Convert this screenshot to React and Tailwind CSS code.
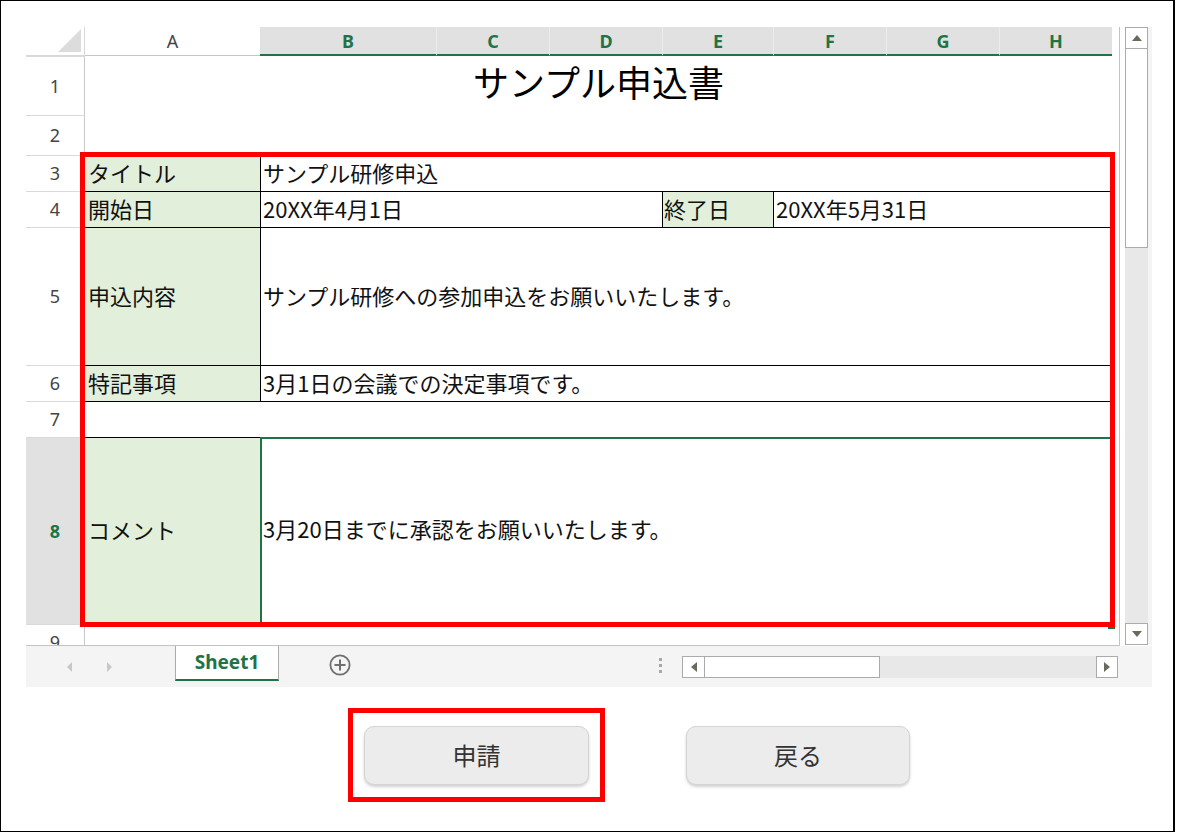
import React from "react";

function RowHead({ n, sel }) {
  return (
    <div
      className={
        "flex items-center justify-center border-t border-r border-t-[#dadada] border-r-[#c8c8c8] text-[18px] font-['Noto_Sans',sans-serif] " +
        (sel ? "bg-[#e1e1e1] text-[#217346] font-bold" : "bg-white text-[#444]")
      }
    >
      {n}
    </div>
  );
}

function ColHead({ c, first }) {
  return (
    <div
      className={
        "flex items-center justify-center bg-[#e1e1e1] text-[#217346] font-bold text-[18px] font-['Noto_Sans',sans-serif] border-b-2 border-b-[#217346] pt-[1px] " +
        (first ? "" : "border-l border-l-[#ececec]")
      }
    >
      {c}
    </div>
  );
}

function Label({ children }) {
  return (
    <div className="flex items-center bg-[#e2efda] pl-[3px] pb-[3px] text-[22px] text-[#111] border-t border-black">
      {children}
    </div>
  );
}

function ScrollTri({ dir }) {
  const pts = {
    up: "0,6 5,0 10,6",
    down: "0,0 10,0 5,6",
    left: "6,0 6,10 0,5",
    right: "0,0 0,10 6,5",
  }[dir];
  const vert = dir === "up" || dir === "down";
  return (
    <svg width={vert ? 10 : 6} height={vert ? 6 : 10} viewBox={vert ? "0 0 10 6" : "0 0 6 10"}>
      <polygon points={pts} fill="#676b5c" />
    </svg>
  );
}

const valCls = "flex items-center pl-[2px] pb-[3px] text-[22px] text-[#111]";

export default function App() {
  return (
    <div className="w-[1177px] h-[832px] bg-white font-['Noto_Sans_CJK_JP',sans-serif]">
      <div className="w-[1175px] h-[832px] border border-black border-r-2 pl-[25px] pt-[26px] flex flex-col">
        {/* spreadsheet */}
        <div className="w-[1126px] h-[660px] flex flex-col">
          <div className="h-[619px] flex">
            {/* grid area */}
            <div className="relative w-[1094px] h-[619px] border-r border-b border-[#c3c3c3] overflow-hidden">
              <div className="grid w-[1086px] grid-cols-[59px_175px_176px_113px_113px_111px_113px_113px_113px] grid-rows-[29px_59px_40px_36px_36px_138px_36px_36px_187px_36px]">
                {/* header row */}
                <div className="relative bg-white border-r border-b border-[#d8d8d8]">
                  <svg className="absolute right-[3px] bottom-[3px]" width="23" height="23" viewBox="0 0 23 23">
                    <polygon points="23,0 23,23 0,23" fill="#dcdcdc" />
                  </svg>
                </div>
                <div className="flex items-center justify-center bg-white text-[#444] text-[18px] font-['Noto_Sans',sans-serif] border-b border-[#c6c6c6] pt-[1px]">
                  A
                </div>
                <ColHead c="B" first />
                <ColHead c="C" />
                <ColHead c="D" />
                <ColHead c="E" />
                <ColHead c="F" />
                <ColHead c="G" />
                <ColHead c="H" />

                {/* row 1 */}
                <RowHead n="1" />
                <div className="col-span-8 flex items-center justify-center pb-[9px] text-[36px] text-black">
                  サンプル申込書
                </div>

                {/* row 2 */}
                <RowHead n="2" />
                <div className="col-span-8" />

                {/* row 3 */}
                <RowHead n="3" />
                <Label>タイトル</Label>
                <div className={"col-span-7 border-t border-l border-r border-black " + valCls}>
                  サンプル研修申込
                </div>

                {/* row 4 */}
                <RowHead n="4" />
                <Label>開始日</Label>
                <div className={"col-span-3 border-t border-l border-black " + valCls}>
                  20XX年4月1日
                </div>
                <div className="flex items-center bg-[#e2efda] border-t border-l border-black pl-[1px] pb-[3px] text-[22px] text-[#111]">
                  終了日
                </div>
                <div className={"col-span-3 border-t border-l border-r border-black " + valCls}>
                  20XX年5月31日
                </div>

                {/* row 5 */}
                <RowHead n="5" />
                <Label>申込内容</Label>
                <div className={"col-span-7 border-t border-l border-r border-black " + valCls}>
                  サンプル研修への参加申込をお願いいたします。
                </div>

                {/* row 6 */}
                <RowHead n="6" />
                <Label>特記事項</Label>
                <div className={"col-span-7 border-t border-l border-r border-black " + valCls}>
                  3月1日の会議での決定事項です。
                </div>

                {/* row 7 */}
                <RowHead n="7" />
                <div className="col-span-8 border-t border-r border-black" />

                {/* row 8 */}
                <RowHead n="8" sel />
                <div className="flex items-center bg-[#e2efda] pl-[3px] pb-[3px] text-[22px] text-[#111] border-t border-b border-black">
                  コメント
                </div>
                <div className="col-span-7 flex items-center border-2 border-[#217346] pl-[1px] pb-[4px] text-[22px] text-[#111]">
                  3月20日までに承認をお願いいたします。
                </div>

                {/* row 9 */}
                <RowHead n="9" />
                <div className="col-span-8" />
              </div>

              {/* fill handle */}
              <div className="absolute left-[1082px] top-[595px] w-[7px] h-[7px] bg-[#217346]" />
              {/* red annotation box */}
              <div className="absolute left-[54px] top-[125px] w-[1035px] h-[475px] border-[5px] border-[#ff0000]" />
            </div>

            {/* vertical scrollbar */}
            <div className="w-[32px] h-[619px] pl-[5px]">
              <div className="w-[27px] h-[618px] bg-[#f4f4f4] flex flex-col">
                <div className="w-[23px] h-[22px] bg-white border border-[#ababab] flex items-center justify-center">
                  <ScrollTri dir="up" />
                </div>
                <div className="w-[23px] flex-1 bg-[#e8e8e8] flex flex-col">
                  <div className="w-[23px] h-[199px] bg-white border-x border-b border-[#ababab]" />
                </div>
                <div className="w-[23px] h-[22px] bg-white border border-[#ababab] flex items-center justify-center">
                  <ScrollTri dir="down" />
                </div>
              </div>
            </div>
          </div>

          {/* sheet tab bar */}
          <div className="h-[41px] bg-[#f4f4f4] flex items-center pr-[34px]">
            <div className="w-[149px] h-full flex items-center pl-[41px] gap-[35px]">
              <svg width="5" height="10" viewBox="0 0 5 10">
                <polygon points="5,0 5,10 0,5" fill="#c8c8c8" />
              </svg>
              <svg width="5" height="10" viewBox="0 0 5 10">
                <polygon points="0,0 0,10 5,5" fill="#c8c8c8" />
              </svg>
            </div>
            <div className="self-start -mt-px w-[104px] h-[36px] bg-white border-x border-[#ababab] border-b-2 border-b-[#217346] flex items-center justify-center text-[19px] font-bold text-[#217346] font-['Noto_Sans',sans-serif]">
              Sheet1
            </div>
            <div className="ml-[50px] mb-[3px]">
              <svg width="22" height="22" viewBox="0 0 22 22">
                <circle cx="11" cy="11" r="9.6" fill="none" stroke="#6e6e6e" strokeWidth="1.8" />
                <line x1="11" y1="5.5" x2="11" y2="16.5" stroke="#6e6e6e" strokeWidth="2" />
                <line x1="5.5" y1="11" x2="16.5" y2="11" stroke="#6e6e6e" strokeWidth="2" />
              </svg>
            </div>
            <div className="flex-1" />
            <div className="flex flex-col gap-[3px] mb-[3px] mr-[20px]">
              <div className="w-[3px] h-[3px] bg-[#a8a8a8]" />
              <div className="w-[3px] h-[3px] bg-[#a8a8a8]" />
              <div className="w-[3px] h-[3px] bg-[#a8a8a8]" />
            </div>
            <div className="w-[436px] h-[22px] flex bg-[#e8e8e8]">
              <div className="w-[23px] h-[22px] bg-white border border-[#ababab] flex items-center justify-center">
                <ScrollTri dir="left" />
              </div>
              <div className="w-[175px] h-[22px] bg-white border-y border-r border-[#ababab]" />
              <div className="flex-1" />
              <div className="w-[22px] h-[22px] bg-white border border-[#ababab] flex items-center justify-center">
                <ScrollTri dir="right" />
              </div>
            </div>
          </div>
        </div>

        {/* buttons */}
        <div className="flex ml-[338px] mt-[39px] gap-[97px]">
          <div className="relative">
            <button className="w-[225px] h-[59px] rounded-[10px] bg-[#ececec] border border-[#d4d4d4] shadow-[0_2px_3px_rgba(0,0,0,0.18)] text-[24px] text-[#333] flex items-center justify-center pb-[2px]">
              申請
            </button>
            <div className="absolute -left-[16px] -top-[18px] -right-[16px] -bottom-[17px] border-[5px] border-[#ff0000] pointer-events-none" />
          </div>
          <button className="w-[224px] h-[59px] rounded-[10px] bg-[#ececec] border border-[#d4d4d4] shadow-[0_2px_3px_rgba(0,0,0,0.18)] text-[24px] text-[#333] flex items-center justify-center pb-[2px]">
            戻る
          </button>
        </div>
      </div>
    </div>
  );
}
